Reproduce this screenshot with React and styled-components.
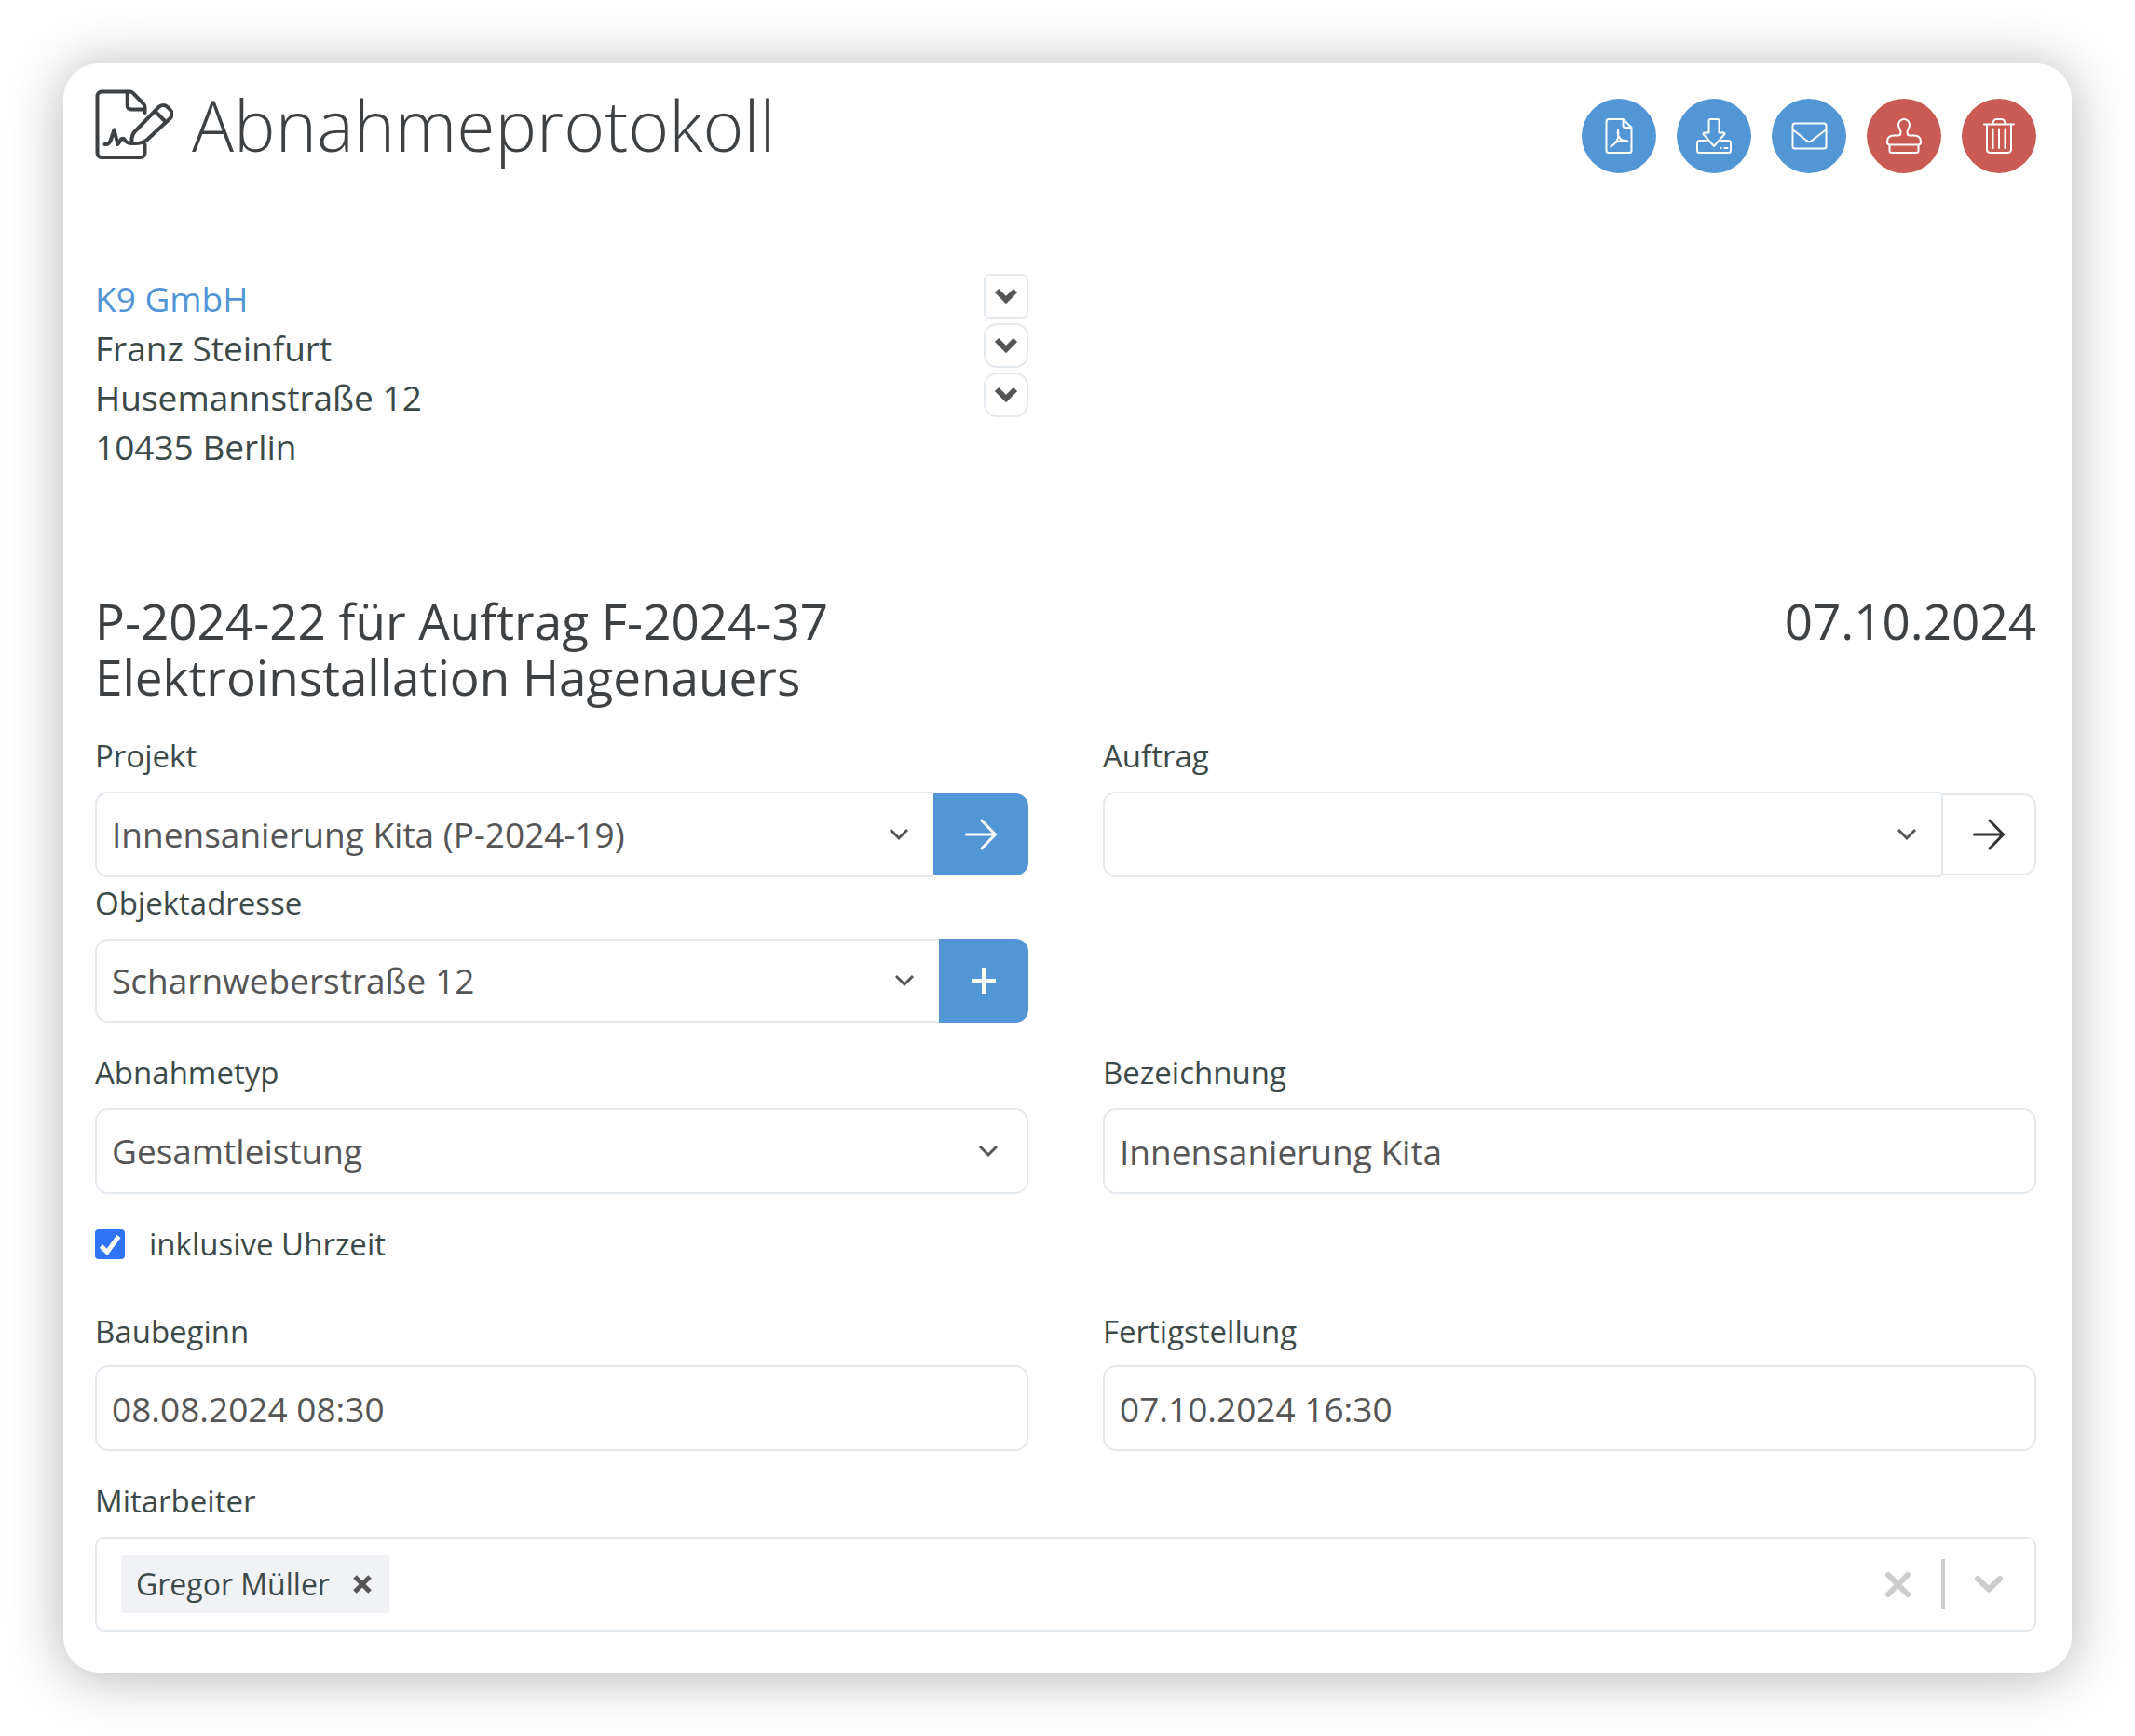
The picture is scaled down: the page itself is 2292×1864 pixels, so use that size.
import React, { useState } from "react";
import styled, { createGlobalStyle, css } from "styled-components";

const color = {
  blue: "#5296d6",
  red: "#c95b54",
  border: "#e4e9ee",
  heading: "#3d4144",
  text: "#3c4949",
  value: "#555555",
  muted: "#cccccc",
  tag: "#f0f2f6",
  check: "#3074f6",
};

const GlobalStyle = createGlobalStyle`
  *, *::before, *::after { box-sizing: border-box; }
  body {
    margin: 0;
    background: #ffffff;
    font-family: "Open Sans", "Noto Sans", sans-serif;
    color: ${color.text};
  }
  button, input, select { font: inherit; color: inherit; }
  h1, h2, p { margin: 0; font-weight: 400; }
`;

const Page = styled.div`
  padding: 68px;
`;

const Card = styled.main`
  padding: 18px 38px 44px 34px;
  border-radius: 38px;
  background: #ffffff;
  box-shadow: 0 4px 60px rgba(0, 0, 0, 0.3);
`;

const Header = styled.header`
  display: flex;
  align-items: flex-start;
  justify-content: space-between;
`;

const TitleGroup = styled.div`
  display: flex;
  align-items: center;
  gap: 20px;
  color: ${color.heading};
`;

const Title = styled.h1`
  font-size: 75px;
  line-height: 96px;
  font-weight: 300;
`;

const Actions = styled.div`
  display: flex;
  gap: 22px;
  padding-top: 20px;
`;

const RoundButton = styled.button`
  display: grid;
  place-items: center;
  width: 80px;
  height: 80px;
  padding: 0;
  border: 0;
  border-radius: 50%;
  background: ${(p) => (p.$danger ? color.red : color.blue)};
  color: #ffffff;
  cursor: pointer;
`;

const Columns = styled.div`
  display: grid;
  grid-template-columns: 1fr 1fr;
  column-gap: 80px;
  margin-top: ${(p) => p.$top || 0}px;
`;

const Address = styled.address`
  margin-top: 108px;
  font-style: normal;
`;

const AddressLine = styled.div`
  display: flex;
  align-items: flex-start;
  justify-content: space-between;
  font-size: 37px;
  line-height: 53px;
`;

const CustomerLink = styled.a`
  color: ${color.blue};
  text-decoration: none;
`;

const ToggleButton = styled.button`
  display: grid;
  place-items: center;
  width: 48px;
  height: 48px;
  padding: 0;
  border: 2px solid ${color.border};
  border-radius: ${(p) => (p.$square ? 6 : 14)}px;
  background: #ffffff;
  color: ${color.value};
  cursor: pointer;
`;

const DocumentHead = styled.div`
  display: flex;
  justify-content: space-between;
  margin-top: 131px;
  color: ${color.heading};
`;

const DocumentTitle = styled.h2`
  font-size: 53px;
  line-height: 60px;
`;

const DocumentDate = styled.p`
  font-size: 53px;
  line-height: 60px;
`;

const Field = styled.div`
  display: flex;
  flex-direction: column;
  gap: ${(p) => p.$gap || 14}px;
  margin-top: ${(p) => p.$top || 0}px;
`;

const Label = styled.label`
  font-size: 33px;
  line-height: 48px;
`;

const InputGroup = styled.div`
  display: flex;
  align-items: center;
`;

const box = css`
  width: 100%;
  min-width: 0;
  height: 92px;
  padding: 0 16px;
  border: 2px solid ${color.border};
  border-radius: 14px;
  background: #ffffff;
  color: ${color.value};
  font-size: 37px;
  outline-color: ${color.blue};
`;

const TextInput = styled.input`
  ${box}
`;

const SelectWrap = styled.div`
  display: grid;
  flex: 1;
  align-items: center;
  min-width: 0;

  > select, > svg { grid-area: 1 / 1; }
  > svg {
    justify-self: end;
    margin-right: ${(p) => (p.$attached ? 25 : 31)}px;
    color: ${color.value};
    pointer-events: none;
  }
`;

const Select = styled.select`
  ${box}
  height: ${(p) => (p.$compact ? 90 : 92)}px;
  padding-bottom: 2px;
  appearance: none;
  ${(p) =>
    p.$attached &&
    css`
      border-right-width: 0;
      border-top-right-radius: 0;
      border-bottom-right-radius: 0;
    `}
`;

const AddonButton = styled.button`
  display: grid;
  place-items: center;
  width: ${(p) => (p.$compact ? 96 : 102)}px;
  height: ${(p) => (p.$compact ? 90 : 88)}px;
  padding: 0;
  border: 2px solid ${(p) => (p.$plain ? color.border : color.blue)};
  border-radius: 0 14px 14px 0;
  background: ${(p) => (p.$plain ? "#ffffff" : color.blue)};
  color: ${(p) => (p.$plain ? "#333333" : "#ffffff")};
  cursor: pointer;
`;

const CheckRow = styled.label`
  display: flex;
  align-items: center;
  gap: 26px;
  width: fit-content;
  margin-top: 30px;
  font-size: 33px;
  line-height: 48px;
`;

const CheckBoxWrap = styled.span`
  display: grid;
  color: #ffffff;

  > * { grid-area: 1 / 1; }
  > svg { pointer-events: none; }
  > input:not(:checked) + svg { display: none; }
`;

const CheckBox = styled.input`
  appearance: none;
  width: 32px;
  height: 32px;
  margin: 0;
  border: 2px solid #b5babf;
  border-radius: 4px;

  &:checked {
    border-color: ${color.check};
    background: ${color.check};
  }
`;

const MultiSelect = styled.div`
  display: flex;
  align-items: center;
  height: 102px;
  padding: 0 33px 0 26px;
  border: 2px solid ${color.border};
  border-radius: 10px;
`;

const Tag = styled.span`
  display: flex;
  align-items: center;
  height: 62px;
  padding-left: 16px;
  border-radius: 4px;
  background: ${color.tag};
  font-size: 32px;
  line-height: 60px;
  white-space: nowrap;
`;

const TagRemove = styled.button`
  display: grid;
  place-items: center;
  width: 58px;
  height: 62px;
  margin-left: 6px;
  padding: 0;
  border: 0;
  background: transparent;
  color: ${color.value};
  cursor: pointer;
`;

const SearchInput = styled.input`
  flex: 1;
  min-width: 0;
  height: 62px;
  border: 0;
  background: transparent;
  font-size: 32px;
  outline: none;
`;

const Indicator = styled.button`
  display: grid;
  place-items: center;
  width: 32px;
  height: 62px;
  padding: 0;
  border: 0;
  background: transparent;
  color: ${color.muted};
  cursor: pointer;
`;

const Divider = styled.span`
  width: 4px;
  height: 54px;
  margin: 0 31px;
  background: ${color.muted};
`;

const Icon = ({ w = 40, h = 40, box: viewBox, stroke = 2, cap = "round", children }) => (
  <svg
    width={w}
    height={h}
    viewBox={viewBox || `0 0 ${w} ${h}`}
    fill="none"
    stroke="currentColor"
    strokeWidth={stroke}
    strokeLinecap={cap}
    strokeLinejoin="round"
    aria-hidden="true"
  >
    {children}
  </svg>
);

const SignedDocumentIcon = () => (
  <Icon w={84} h={76} box="2 2 84 76" stroke={4}>
    <path d="M55.5 27V21c0-1.300-.5-2.600-1.500-3.500L43 6.200C42 5.200 41 4.600 39.500 4.600H9a4.500 4.500 0 0 0-4.500 4.500V70.500A4.500 4.500 0 0 0 9 75h42a4.500 4.500 0 0 0 4.500-4.500V61" />
    <path d="M36.700 5v14.500a4 4 0 0 0 4 4H55" />
    <path d="M45 47 70.500 20.800a6.500 6.500 0 0 1 9.200 0l3 3a6.500 6.500 0 0 1 0 9.200L58 56c-4 3.300-9 4.500-16.500 4-.5-6 .5-10 3.500-13z" />
    <path d="M66.500 25.500 77.500 36.500" />
    <path d="M12.500 61c3.500.5 5.500-1.500 6.500-5l3.500-10.500 4 15.500 3.500-5.500c1.500-1 3-.5 4 .8 1.500 3 4 3.700 8 3.700" />
  </Icon>
);

const PdfIcon = () => (
  <Icon>
    <path d="M24.500 2H9a2.500 2.500 0 0 0-2.500 2.500v31A2.500 2.500 0 0 0 9 38h22a2.500 2.500 0 0 0 2.500-2.500V11zM24.500 2v6.500a2.500 2.500 0 0 0 2.500 2.500h6.500" />
    <path d="M11 31.500c4.500-2.500 8.500-7.500 8.500-13.500 0-2.500-.2-4-.5-4.500-.8 3-.2 6.500 2.500 9.500 2.500 2.500 5.500 3.500 8 2.500-4-1.500-9-.2-13 1.500" />
  </Icon>
);

const DownloadIcon = () => (
  <Icon>
    <path d="M14.500 16.500V4a2 2 0 0 1 2-2h7a2 2 0 0 1 2 2v12.500h4.500c1.500 0 2 1 1 2L20 31 9 18.500c-1-1-.5-2 1-2z" />
    <path d="M11.500 25H4.500A2.500 2.500 0 0 0 2 27.500v8A2.500 2.500 0 0 0 4.500 38h31a2.500 2.500 0 0 0 2.500-2.500v-8a2.500 2.500 0 0 0-2.500-2.500H28" />
    <path d="M27 33h.5M31.500 33h3" />
  </Icon>
);

const MailIcon = () => (
  <Icon>
    <rect x="2.500" y="6.500" width="36" height="27" rx="2.500" />
    <path d="m3 13.500 14.800 11.800c1.500 1.200 3.500 1.200 5 0L38 13.500" />
  </Icon>
);

const StampIcon = () => (
  <Icon>
    <path d="M5 29.500c-2 0-3-1-3-3 0-4.500 2.500-7 7-7h4.500c2 0 3-1 3-3 0-4-2.500-5-2.500-8.500a6 6 0 0 1 12 0c0 3.500-2.500 4.500-2.500 8.500 0 2 1 3 3 3H31c4.500 0 7 2.500 7 7 0 2-1 3-3 3z" />
    <path d="M4.500 30v6a2 2 0 0 0 2 2h27a2 2 0 0 0 2-2v-6" />
  </Icon>
);

const TrashIcon = () => (
  <Icon>
    <path d="M4 7.500h32M13 7.500c.8-3.500 2-5.500 4-5.500h6c2 0 3.200 2 4 5.500" />
    <path d="M7 7.500V34.500A3.500 3.500 0 0 0 10.500 38h19a3.500 3.500 0 0 0 3.500-3.500V7.500" />
    <path d="M13.500 12.500V33M20 12.500V33M26.500 12.500V33" />
  </Icon>
);

const CaretIcon = () => (
  <Icon w={24} h={16} stroke={3} cap="butt">
    <path d="m3 3 9 9 9-9" strokeLinejoin="miter" />
  </Icon>
);

const BoldChevronIcon = () => (
  <Icon w={28} h={20} stroke={6} cap="butt">
    <path d="M4 4 14 14 24 4" strokeLinejoin="miter" />
  </Icon>
);

const ArrowIcon = () => (
  <Icon w={36} h={36} stroke={3}>
    <path d="M2.500 18H33M19 3l14.500 15L19 33" strokeLinejoin="miter" />
  </Icon>
);

const PlusIcon = () => (
  <Icon w={30} h={30} stroke={4} cap="butt">
    <path d="M15 1v28M2 15h26" />
  </Icon>
);

const CheckIcon = () => (
  <Icon w={32} h={32} stroke={5} cap="butt">
    <path d="m6.500 18 6.500 6.500L25.500 7.500" strokeLinejoin="miter" />
  </Icon>
);

const CrossIcon = ({ size, stroke, cap }) => (
  <Icon w={size} h={size} stroke={stroke} cap={cap}>
    <path d={`M3 3 ${size - 3} ${size - 3}M${size - 3} 3 3 ${size - 3}`} />
  </Icon>
);

const DropIcon = () => (
  <Icon w={32} h={20} stroke={6}>
    <path d="m4 4 12 11.500L28 4" />
  </Icon>
);

const actions = [
  { label: "PDF anzeigen", icon: PdfIcon },
  { label: "Herunterladen", icon: DownloadIcon },
  { label: "Per E-Mail senden", icon: MailIcon },
  { label: "Stempeln", icon: StampIcon, danger: true },
  { label: "Löschen", icon: TrashIcon, danger: true },
];

function SelectField({ id, label, value, top, compact, addon }) {
  return (
    <Field $top={top}>
      <Label htmlFor={id}>{label}</Label>
      <InputGroup>
        <SelectWrap $attached={!!addon}>
          <Select id={id} defaultValue={value} $attached={!!addon} $compact={compact}>
            <option value={value}>{value}</option>
          </Select>
          <CaretIcon />
        </SelectWrap>
        {addon}
      </InputGroup>
    </Field>
  );
}

function TextField({ id, label, value, gap }) {
  return (
    <Field $gap={gap}>
      <Label htmlFor={id}>{label}</Label>
      <TextInput id={id} type="text" defaultValue={value} />
    </Field>
  );
}

export default function App() {
  const [withTime, setWithTime] = useState(true);

  return (
    <>
      <GlobalStyle />
      <Page>
        <Card>
          <Header>
            <TitleGroup>
              <SignedDocumentIcon />
              <Title>Abnahmeprotokoll</Title>
            </TitleGroup>
            <Actions>
              {actions.map(({ label, icon: ActionIcon, danger }) => (
                <RoundButton key={label} type="button" aria-label={label} $danger={danger}>
                  <ActionIcon />
                </RoundButton>
              ))}
            </Actions>
          </Header>

          <Columns>
            <Address>
              <AddressLine>
                <CustomerLink href="#kunde">K9 GmbH</CustomerLink>
                <ToggleButton type="button" aria-label="Kunde wählen" $square>
                  <BoldChevronIcon />
                </ToggleButton>
              </AddressLine>
              <AddressLine>
                Franz Steinfurt
                <ToggleButton type="button" aria-label="Ansprechpartner wählen">
                  <BoldChevronIcon />
                </ToggleButton>
              </AddressLine>
              <AddressLine>
                Husemannstraße 12
                <ToggleButton type="button" aria-label="Adresse wählen">
                  <BoldChevronIcon />
                </ToggleButton>
              </AddressLine>
              <AddressLine>10435 Berlin</AddressLine>
            </Address>
          </Columns>

          <DocumentHead>
            <DocumentTitle>
              P-2024-22 für Auftrag F-2024-37
              <br />
              Elektroinstallation Hagenauers
            </DocumentTitle>
            <DocumentDate>07.10.2024</DocumentDate>
          </DocumentHead>

          <Columns $top={31}>
            <SelectField
              id="projekt"
              label="Projekt"
              value="Innensanierung Kita (P-2024-19)"
              addon={
                <AddonButton type="button" aria-label="Projekt öffnen">
                  <ArrowIcon />
                </AddonButton>
              }
            />
            <SelectField
              id="auftrag"
              label="Auftrag"
              value=""
              addon={
                <AddonButton type="button" aria-label="Auftrag öffnen" $plain>
                  <ArrowIcon />
                </AddonButton>
              }
            />
            <SelectField
              id="objektadresse"
              label="Objektadresse"
              value="Scharnweberstraße 12"
              top={4}
              compact
              addon={
                <AddonButton type="button" aria-label="Objektadresse hinzufügen" $compact>
                  <PlusIcon />
                </AddonButton>
              }
            />
          </Columns>

          <Columns $top={30}>
            <SelectField id="abnahmetyp" label="Abnahmetyp" value="Gesamtleistung" />
            <TextField id="bezeichnung" label="Bezeichnung" value="Innensanierung Kita" />
          </Columns>

          <CheckRow>
            <CheckBoxWrap>
              <CheckBox
                type="checkbox"
                checked={withTime}
                onChange={(e) => setWithTime(e.target.checked)}
              />
              <CheckIcon />
            </CheckBoxWrap>
            inklusive Uhrzeit
          </CheckRow>

          <Columns $top={46}>
            <TextField id="baubeginn" label="Baubeginn" value="08.08.2024 08:30" gap={12} />
            <TextField id="fertigstellung" label="Fertigstellung" value="07.10.2024 16:30" gap={12} />
          </Columns>

          <Field $top={30}>
            <Label htmlFor="mitarbeiter">Mitarbeiter</Label>
            <MultiSelect>
              <Tag>
                Gregor Müller
                <TagRemove type="button" aria-label="Gregor Müller entfernen">
                  <CrossIcon size={22} stroke={5} cap="butt" />
                </TagRemove>
              </Tag>
              <SearchInput id="mitarbeiter" type="text" />
              <Indicator type="button" aria-label="Auswahl leeren">
                <CrossIcon size={27} stroke={6} />
              </Indicator>
              <Divider />
              <Indicator type="button" aria-label="Liste öffnen">
                <DropIcon />
              </Indicator>
            </MultiSelect>
          </Field>
        </Card>
      </Page>
    </>
  );
}
